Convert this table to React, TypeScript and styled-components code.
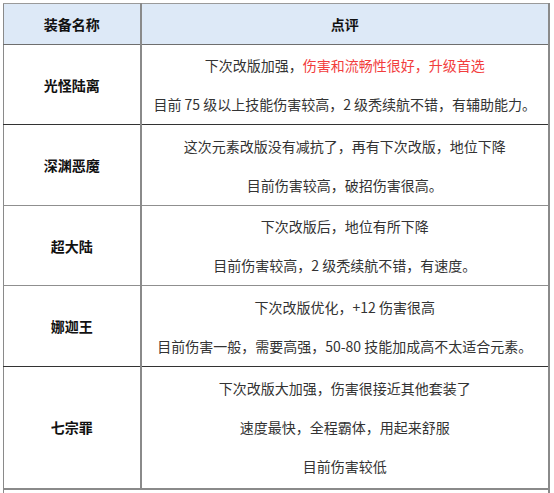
import React from 'react';
import styled, { createGlobalStyle } from 'styled-components';

const GlobalStyle = createGlobalStyle`
  body {
    margin: 0;
    background: #fff;
    font-family: 'Microsoft YaHei', 'Noto Sans CJK SC', 'Liberation Sans', sans-serif;
  }
`;

type Entry = {
  name: string;
  lines: React.ReactNode[];
  height: number;
  dark?: boolean;
};

const entries: Entry[] = [
  {
    name: '光怪陆离',
    height: 80,
    dark: true,
    lines: [
      <>
        下次改版加强，<Hot>伤害和流畅性很好，升级首选</Hot>
      </>,
      '目前 75 级以上技能伤害较高，2 级秃续航不错，有辅助能力。',
    ],
  },
  {
    name: '深渊恶魔',
    height: 81,
    lines: ['这次元素改版没有减抗了，再有下次改版，地位下降', '目前伤害较高，破招伤害很高。'],
  },
  {
    name: '超大陆',
    height: 80,
    lines: ['下次改版后，地位有所下降', '目前伤害较高，2 级秃续航不错，有速度。'],
  },
  {
    name: '娜迦王',
    height: 81,
    dark: true,
    lines: ['下次改版优化，+12 伤害很高', '目前伤害一般，需要高强，50-80 技能加成高不太适合元素。'],
  },
  {
    name: '七宗罪',
    height: 122,
    lines: ['下次改版大加强，伤害很接近其他套装了', '速度最快，全程霸体，用起来舒服', '目前伤害较低'],
  },
];

function Hot({ children }: { children: React.ReactNode }) {
  return <HotText>{children}</HotText>;
}

const HotText = styled.span`
  color: #f23d3d;
`;

const Page = styled.div`
  padding: 3px 4px 0 3px;
  height: 493px;
  overflow: hidden;
  box-sizing: border-box;
`;

const Table = styled.table`
  width: 547px;
  border-collapse: collapse;
  table-layout: fixed;
  border-left: 1px solid #8a8a8a;
  border-right: 2px solid #8a8a8a;
  border-top: 1px solid #9a9a9a;
`;

const HeadCell = styled.th`
  height: 40px;
  padding: 0;
  background: #dde9f7;
  color: #111;
  font-size: 14px;
  font-weight: 700;
  text-align: center;
  border-bottom: 1px solid #6e6e6e;
  border-right: 2px solid #8a8a8a;

  &:last-child {
    border-right: none;
  }
`;

const Row = styled.tr<{ $dark?: boolean }>`
  td {
    border-bottom: ${(p) => (p.$dark ? '1px solid #333' : '1px solid #8f8f8f')};
  }
`;

const NameCell = styled.td`
  padding: 0;
  font-size: 14px;
  font-weight: 700;
  color: #111;
  text-align: center;
  vertical-align: middle;
  border-right: 2px solid #8a8a8a;
`;

const NoteCell = styled.td`
  padding: 0 6px;
  vertical-align: middle;
`;

const Notes = styled.div`
  display: flex;
  flex-direction: column;
  align-items: center;
  gap: 17px;
  font-size: 14px;
  line-height: 22px;
  color: #333;
  text-align: center;
  white-space: nowrap;
`;

const TailRow = styled.tr`
  td {
    height: 20px;
    border-top: 2px solid #8a8a8a;
  }
`;

export default function App() {
  return (
    <>
      <GlobalStyle />
      <Page>
        <Table>
          <colgroup>
            <col style={{ width: 137 }} />
            <col />
          </colgroup>
          <thead>
            <tr>
              <HeadCell>装备名称</HeadCell>
              <HeadCell>点评</HeadCell>
            </tr>
          </thead>
          <tbody>
            {entries.map((e) => (
              <Row key={e.name} $dark={e.dark} style={{ height: e.height }}>
                <NameCell>{e.name}</NameCell>
                <NoteCell>
                  <Notes>
                    {e.lines.map((l, i) => (
                      <div key={i}>{l}</div>
                    ))}
                  </Notes>
                </NoteCell>
              </Row>
            ))}
            <TailRow>
              <td colSpan={2} />
            </TailRow>
          </tbody>
        </Table>
      </Page>
    </>
  );
}
